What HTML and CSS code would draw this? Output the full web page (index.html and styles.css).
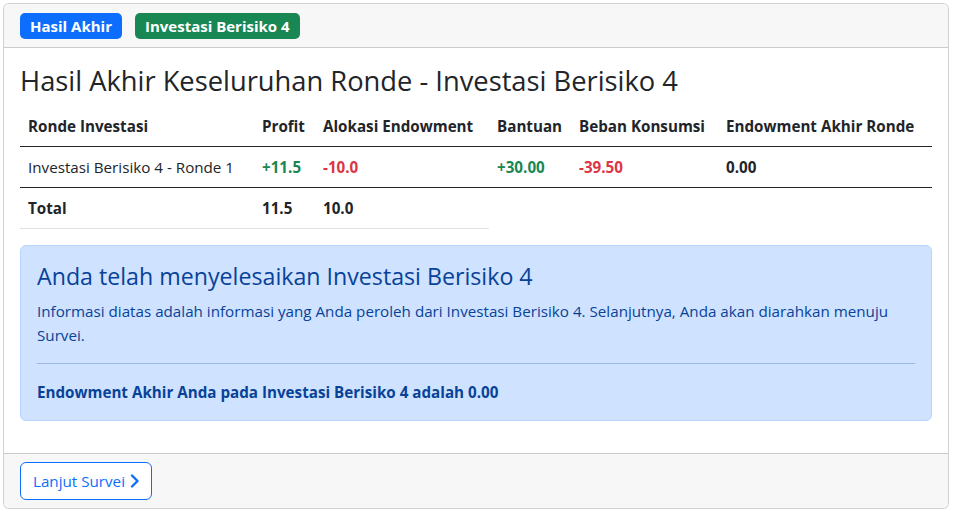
FILE: index.html
```html
<!DOCTYPE html>
<html lang="id">
<head>
<meta charset="utf-8">
<title>Hasil Akhir</title>
<link rel="stylesheet" href="styles.css">
</head>
<body>
<div class="page">
  <div class="card">
    <div class="card-header">
      <span class="badge badge-primary">Hasil Akhir</span>
      <span class="badge badge-success">Investasi Berisiko 4</span>
    </div>
    <div class="card-body">
      <h3 class="title">Hasil Akhir Keseluruhan Ronde - Investasi Berisiko 4</h3>
      <table class="table">
        <colgroup>
          <col class="c1"><col class="c2"><col class="c3"><col class="c4"><col class="c5"><col class="c6">
        </colgroup>
        <thead>
          <tr>
            <th>Ronde Investasi</th>
            <th>Profit</th>
            <th>Alokasi Endowment</th>
            <th>Bantuan</th>
            <th>Beban Konsumsi</th>
            <th>Endowment Akhir Ronde</th>
          </tr>
        </thead>
        <tbody>
          <tr>
            <td>Investasi Berisiko 4 - Ronde 1</td>
            <td class="pos">+11.5</td>
            <td class="neg">-10.0</td>
            <td class="pos">+30.00</td>
            <td class="neg">-39.50</td>
            <td class="strong">0.00</td>
          </tr>
        </tbody>
        <tfoot>
          <tr>
            <td>Total</td>
            <td>11.5</td>
            <td>10.0</td>
          </tr>
        </tfoot>
      </table>
      <div class="alert">
        <h4 class="alert-heading">Anda telah menyelesaikan Investasi Berisiko 4</h4>
        <p class="alert-text">Informasi diatas adalah informasi yang Anda peroleh dari Investasi Berisiko 4. Selanjutnya, Anda akan diarahkan menuju Survei.</p>
        <hr class="alert-hr">
        <p class="alert-final">Endowment Akhir Anda pada Investasi Berisiko 4 adalah 0.00</p>
      </div>
    </div>
    <div class="card-footer">
      <button class="btn-outline" type="button">Lanjut Survei
        <svg class="chev" viewBox="0 0 10 14" width="10" height="14" aria-hidden="true"><polyline points="2,1.5 7.5,7 2,12.5"/></svg>
      </button>
    </div>
  </div>
</div>
</body>
</html>
```
FILE: styles.css
```css
* { box-sizing: border-box; }
html, body { margin: 0; padding: 0; background: #fff; }
body {
  font-family: "Segoe UI", "Open Sans", "Liberation Sans", sans-serif;
  font-size: 15.2px;
  line-height: 24px;
  color: #212529;
}
.page { padding: 3px 4px 3px 3px; }
.card {
  border: 1px solid rgba(0,0,0,.175);
  border-radius: 6px;
  background: #fff;
  overflow: hidden;
}
.card-header {
  background: #f7f7f7;
  border-bottom: 1px solid rgba(0,0,0,.175);
  padding: 8px 16px;
  display: flex;
  gap: 13px;
  height: 44px;
  align-items: center;
}
.badge {
  display: inline-block;
  font-size: 15px;
  font-weight: 700;
  line-height: 1;
  color: #fff;
  padding: 6px 10px 5px;
  border-radius: 5px;
}
.badge-primary { background: #0d6efd; }
.badge-success { background: #198754; }
.card-body { padding: 16px; }
.title {
  margin: 0 0 8px;
  font-size: 27.3px;
  font-weight: 500;
  line-height: 34px;
}
.table {
  width: 100%;
  border-collapse: collapse;
  table-layout: fixed;
  margin-bottom: 16px;
}
.c1 { width: 234px; }
.c2 { width: 61px; }
.c3 { width: 174px; }
.c4 { width: 82px; }
.c5 { width: 147px; }
.c6 { width: 214px; }
.table th, .table td {
  padding: 8px;
  text-align: left;
  vertical-align: top;
  white-space: nowrap;
}
.table th { font-weight: 700; border-bottom: 1px solid #212529; }
.table tbody td { border-bottom: 1px solid #212529; }
.table tfoot td { font-weight: 700; border-bottom: 1px solid #dee2e6; }
.pos { color: #198754; font-weight: 700; }
.neg { color: #dc3545; font-weight: 700; }
.strong { font-weight: 700; }
.alert {
  background: #cfe2ff;
  border: 1px solid #b6d4fe;
  border-radius: 6px;
  color: #084298;
  padding: 16px;
  margin-bottom: 16px;
}
.alert-heading {
  margin: 0 0 8px;
  font-size: 23.2px;
  font-weight: 500;
  line-height: 29px;
}
.alert-text { margin: 0 0 16px; }
.alert-hr {
  margin: 16px 0;
  border: 0;
  border-top: 1px solid #084298;
  opacity: .25;
}
.alert-final { margin: 0; font-weight: 700; }
.card-footer {
  background: #f7f7f7;
  border-top: 1px solid rgba(0,0,0,.175);
  padding: 8px 16px;
}
.btn-outline {
  font: inherit;
  color: #0d6efd;
  background: #fff;
  border: 1px solid #0d6efd;
  border-radius: 6px;
  padding: 6px 11px 6px 12px;
  line-height: 24px;
  display: inline-flex;
  align-items: center;
  gap: 5px;
  cursor: pointer;
}
.chev { fill: none; stroke: #0d6efd; stroke-width: 2.4; stroke-linecap: round; stroke-linejoin: round; }
```
